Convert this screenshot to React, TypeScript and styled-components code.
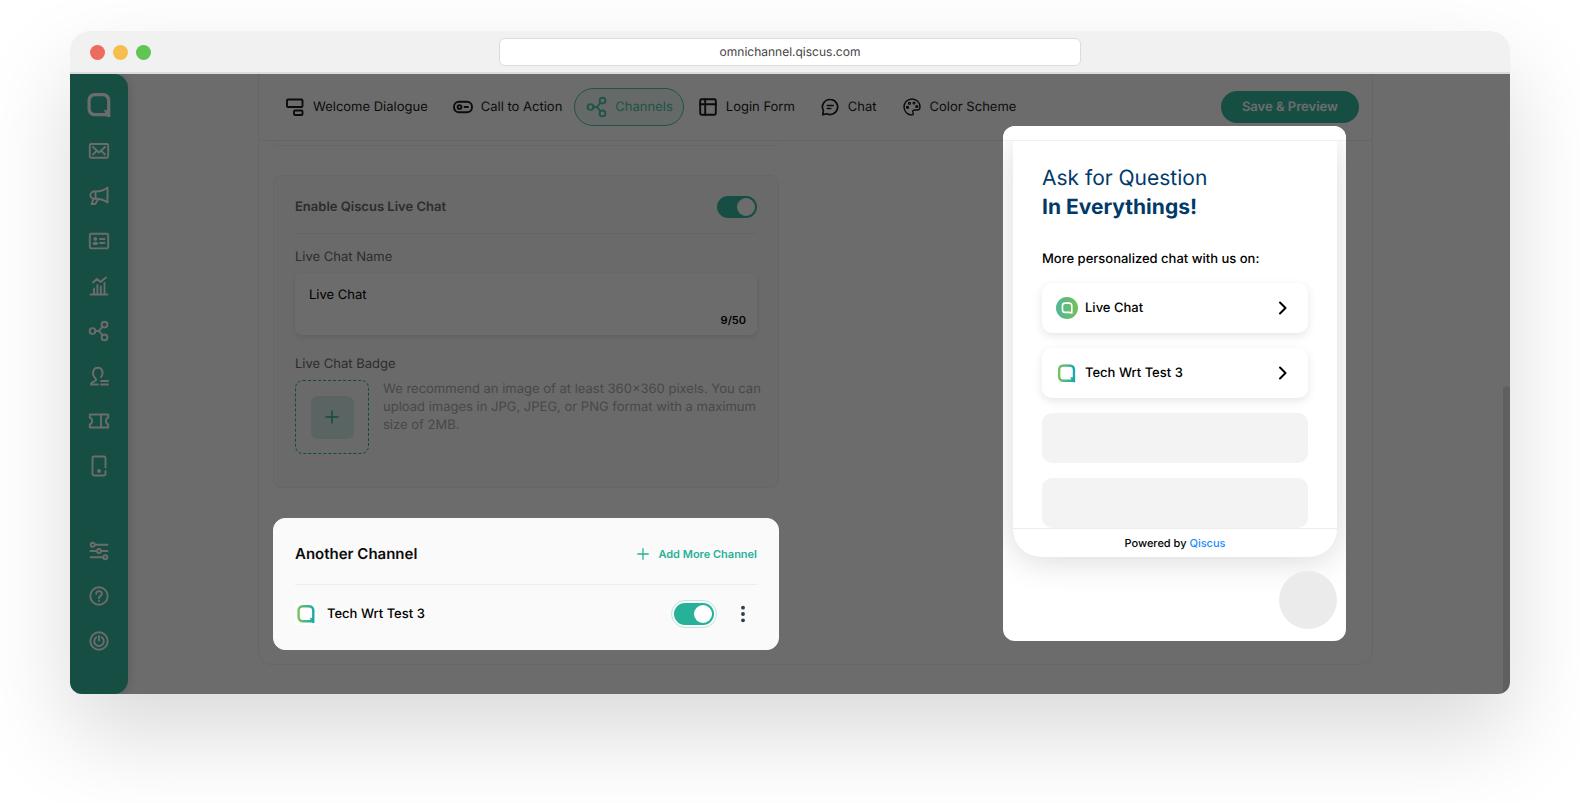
import React from "react";
import styled, { createGlobalStyle } from "styled-components";

const GlobalStyle = createGlobalStyle`
  *, *::before, *::after { box-sizing: border-box; }
  body {
    margin: 0;
    background: #fff;
    color: #000;
    font-family: Inter, "Liberation Sans", sans-serif;
    font-size: 13px;
    line-height: 18px;
    text-rendering: geometricPrecision;
  }
  button, input { font: inherit; color: inherit; text-rendering: inherit; }
  button { background: none; border: 0; padding: 0; cursor: pointer; }
  h1, h2, h3, p, ul { margin: 0; padding: 0; }
  svg { display: block; flex: none; }
`;

const brand = "#27b199";
const brandSoft = "#34b89e";
const line = "#f0f0f0";

/* ---------- browser frame ---------- */

const Stage = styled.div`
  padding: 31px 70px 109px;
  overflow: hidden;
`;

const Browser = styled.div`
  border-radius: 20px 20px 12px 12px;
  box-shadow: 0 40px 90px rgba(0, 0, 0, 0.15);
`;

const TitleBar = styled.header`
  display: grid;
  grid-template-columns: 1fr minmax(200px, 582px) 1fr;
  align-items: center;
  height: 43px;
  padding: 0 20px;
  background: #f1f1f1;
  border-bottom: 2px solid #dcdcdc;
  border-radius: 20px 20px 0 0;
`;

const Lights = styled.div`
  display: flex;
  gap: 8px;
  padding-top: 2px;
`;

const Light = styled.span<{ $color: string }>`
  width: 15px;
  height: 15px;
  border-radius: 50%;
  background: ${(p) => p.$color};
`;

const Address = styled.input`
  width: 100%;
  height: 28px;
  border: 1px solid #dcdcdc;
  border-radius: 6px;
  background: #fff;
  color: #444;
  font-size: 12px;
  text-align: center;
  outline: 0;
`;

const Viewport = styled.div`
  position: relative;
  display: flex;
  overflow: hidden;
  background: #fff;
  border-radius: 0 0 12px 12px;
`;

const Dim = styled.div`
  position: absolute;
  inset: 0;
  z-index: 1;
  background: rgba(0, 0, 0, 0.576);
  pointer-events: none;
`;

const ScrollThumb = styled.div`
  position: absolute;
  top: 312px;
  right: 0;
  bottom: 0;
  width: 7px;
  border-radius: 4px 4px 0 0;
  background: #e0e0e0;
`;

/* ---------- sidebar ---------- */

const Sidebar = styled.nav`
  display: flex;
  flex: none;
  flex-direction: column;
  align-items: center;
  width: 58px;
  padding: 19px 0 41px;
  background: ${brandSoft};
  border-radius: 0 14px 14px 0;
  box-shadow: 2px 0 10px rgba(0, 0, 0, 0.12);
  color: #fff;
`;

const NavList = styled.div<{ $top: number }>`
  display: flex;
  flex-direction: column;
  gap: 21px;
  margin-top: ${(p) => p.$top}px;
`;

const NavLink = styled.a`
  display: block;
  color: inherit;
`;

/* ---------- settings panel ---------- */

const Page = styled.main`
  flex: 1;
  min-width: 0;
  padding: 0 137px 29px 130px;
`;

const Panel = styled.section`
  border: 1px solid ${line};
  border-top: 0;
  border-radius: 0 0 14px 14px;
`;

const Toolbar = styled.div`
  display: flex;
  align-items: center;
  justify-content: space-between;
  height: 67px;
  padding: 0 13px;
  border-bottom: 1px solid ${line};
`;

const Tabs = styled.div`
  display: flex;
  gap: 1px;
`;

const Tab = styled.button<{ $active?: boolean }>`
  display: flex;
  align-items: center;
  gap: 6px;
  height: 38px;
  padding: 0 10px;
  border: 1px solid ${(p) => (p.$active ? "#4cc4ac" : "transparent")};
  border-radius: 19px;
  background: ${(p) => (p.$active ? "#eff8f2" : "transparent")};
  color: ${(p) => (p.$active ? "#4cc4ac" : "#1c1c1c")};
  white-space: nowrap;
`;

const SaveButton = styled.button`
  height: 32px;
  padding: 0 21px;
  border-radius: 16px;
  background: ${brandSoft};
  color: #fff;
  font-weight: 600;
  white-space: nowrap;
`;

const Body = styled.div`
  display: flex;
  align-items: flex-start;
  justify-content: space-between;
  padding: 0 26px 14px 14px;
`;

const Column = styled.div`
  flex: 0 1 506px;
`;

const CardTail = styled.div`
  height: 5px;
  border: 1px solid ${line};
  border-top: 0;
  border-radius: 0 0 10px 10px;
`;

const Card = styled.section<{ $raised?: boolean; $gap: number; $bottom: number }>`
  position: relative;
  z-index: ${(p) => (p.$raised ? 2 : 0)};
  margin-top: ${(p) => p.$gap}px;
  padding: 0 21px ${(p) => p.$bottom}px;
  border: 1px solid ${(p) => (p.$raised ? "#fafafa" : line)};
  border-radius: ${(p) => (p.$raised ? 12 : 8)}px;
  background: #fafafa;
`;

const CardHeader = styled.div<{ $height: number }>`
  display: flex;
  align-items: center;
  justify-content: space-between;
  height: ${(p) => p.$height}px;
  padding-top: 5px;
  border-bottom: 1px solid #ededed;
`;

const CardTitle = styled.h2<{ $muted?: boolean }>`
  color: ${(p) => (p.$muted ? "#6a6a6a" : "#0c0c0c")};
  font-size: ${(p) => (p.$muted ? 13 : 15)}px;
  font-weight: 600;
`;

const FieldLabel = styled.label<{ $top: number }>`
  display: block;
  margin: ${(p) => p.$top}px 0 7px;
  color: #6a6a6a;
`;

const Field = styled.div`
  height: 62px;
  padding: 11px 11px 7px 14px;
  border-radius: 7px;
  background: #fff;
  box-shadow: 0 2px 6px rgba(0, 0, 0, 0.1);
`;

const TextInput = styled.input`
  display: block;
  width: 100%;
  height: 22px;
  padding: 0;
  border: 0;
  outline: 0;
  background: transparent;
`;

const Counter = styled.div`
  margin-top: 5px;
  font-size: 11px;
  font-weight: 600;
  text-align: right;
`;

const UploadRow = styled.div`
  display: flex;
  gap: 14px;
  margin-right: -10px;
`;

const Upload = styled.button`
  display: flex;
  flex: none;
  align-items: center;
  justify-content: center;
  width: 74px;
  height: 74px;
  border: 1px dashed ${brand};
  border-radius: 8px;
`;

const UploadPlus = styled.span`
  display: flex;
  align-items: center;
  justify-content: center;
  width: 43px;
  height: 43px;
  border-radius: 7px;
  background: #d4efea;
  color: ${brand};
`;

const Hint = styled.p`
  color: #aaa;
`;

const Switch = styled.input<{ $focused?: boolean }>`
  appearance: none;
  display: flex;
  flex: none;
  align-items: center;
  justify-content: flex-end;
  width: 40px;
  height: 22px;
  margin: 0;
  padding: 0 2px;
  border-radius: 11px;
  background: ${(p) => (p.$focused ? brand : brandSoft)};
  outline: ${(p) => (p.$focused ? "1px solid #bfe6df" : "0")};
  outline-offset: 2px;
  cursor: pointer;

  &::before {
    content: "";
    width: 18px;
    height: 18px;
    border-radius: 50%;
    background: #fff;
  }
`;

const AddButton = styled.button`
  display: flex;
  align-items: center;
  gap: 8px;
  color: ${brand};
  font-size: 11px;
  font-weight: 600;
`;

const ChannelRow = styled.div`
  display: flex;
  align-items: center;
  height: 57px;
`;

const LogoTile = styled.span`
  display: flex;
  padding: 2px;
  background: #fff;
`;

const ChannelName = styled.label`
  flex: 1;
  margin-left: 10px;
  font-weight: 500;
`;

const MenuButton = styled.button`
  margin: 0 2px 0 17px;
  color: #2d3e50;
`;

/* ---------- widget preview ---------- */

const Preview = styled.aside`
  position: relative;
  z-index: 2;
  flex: none;
  width: 343px;
  height: 515px;
  margin-top: -15px;
  overflow: hidden;
  border-radius: 12px;
  background: #fff;
`;

const PreviewTop = styled.div`
  position: relative;
  z-index: 1;
  height: 15px;
  border-bottom: 1px solid ${line};
  background: #fff;
`;

const Phone = styled.div`
  margin: 0 9px 0 10px;
  overflow: hidden;
  border-radius: 0 0 28px 28px;
  background: #fff;
  box-shadow: 0 4px 34px rgba(0, 0, 0, 0.15);
`;

const PhoneBody = styled.div`
  padding: 23px 29px 0;
`;

const Greeting = styled.h3`
  color: #013a69;
  font-size: 21px;
  font-weight: 400;
  line-height: 29px;

  strong {
    display: block;
    font-weight: 700;
  }
`;

const Lead = styled.p`
  margin: 28px 0 15px;
  font-weight: 500;
`;

const Options = styled.div`
  display: flex;
  flex-direction: column;
  gap: 15px;
`;

const Option = styled.button`
  display: flex;
  align-items: center;
  gap: 7px;
  height: 50px;
  padding: 0 17px 0 14px;
  border-radius: 10px;
  background: #fff;
  box-shadow: 0 3px 10px rgba(0, 0, 0, 0.1);
  font-weight: 500;
  text-align: left;

  span { flex: 1; }
`;

const Placeholder = styled.div`
  height: 50px;
  border-radius: 10px;
  background: #f3f3f3;
`;

const Powered = styled.p`
  height: 29px;
  border-top: 1px solid #ececec;
  font-size: 11px;
  font-weight: 500;
  line-height: 29px;
  text-align: center;

  a { color: #1a8cff; text-decoration: none; }
`;

const Launcher = styled.button`
  display: block;
  width: 58px;
  height: 58px;
  margin: 14px 9px 0 auto;
  border-radius: 50%;
  background: #ebebeb;
`;

/* ---------- icons ---------- */

type IconProps = { children: React.ReactNode; width?: number; size?: number };

const Icon = ({ children, width = 1.9, size = 24 }: IconProps) => (
  <svg
    width={size}
    height={size}
    viewBox="0 0 24 24"
    fill="none"
    stroke="currentColor"
    strokeWidth={width}
    strokeLinecap="round"
    strokeLinejoin="round"
    aria-hidden="true"
  >
    {children}
  </svg>
);

const ShareShape = () => (
  <>
    <circle cx="5.5" cy="12" r="2.9" />
    <circle cx="17.5" cy="5.6" r="2.9" />
    <circle cx="17.5" cy="18.4" r="2.9" />
    <path d="M8.6 12H12M15.4 7.9 12 12l3.4 4.1" />
  </>
);

const QLogo = ({ size, paint = "currentColor" }: { size: number; paint?: string }) => (
  <svg width={size} height={size} viewBox="0 0 24 24" fill="none" aria-hidden="true">
    <defs>
      <linearGradient id="q-gradient" x1="0" y1="0" x2="1" y2="0">
        <stop offset="0" stopColor="#7cc35b" />
        <stop offset="1" stopColor="#12a9ac" />
      </linearGradient>
    </defs>
    <path
      fill={paint}
      fillRule="evenodd"
      d="M7.500 0h8.800A7 7 0 0 1 23.300 7v17.500l-4.500-1.200H7.500A7 7 0 0 1 .5 16.300V7A7 7 0 0 1 7.500 0ZM8 3.200A4.300 4.300 0 0 0 3.700 7.500v8.300A4.300 4.300 0 0 0 8 20.100h10.200l-1.400-3.500 3 .9.300-2V7.500a4.300 4.300 0 0 0-4.300-4.300Z"
    />
  </svg>
);

const Plus = ({ size, width }: { size: number; width: number }) => (
  <Icon size={size} width={width}>
    <path d="M12 3v18M3 12h18" />
  </Icon>
);

const LiveBadge = () => (
  <svg width="22" height="22" viewBox="0 0 22 22" fill="none" aria-hidden="true">
    <defs>
      <linearGradient id="live-gradient" x1="0" y1="0" x2="1" y2="0">
        <stop offset="0" stopColor="#4fb798" />
        <stop offset="1" stopColor="#74c05a" />
      </linearGradient>
    </defs>
    <circle cx="11" cy="11" r="11" fill="url(#live-gradient)" />
    <path
      d="M15.800 16V8.600A2.500 2.500 0 0 0 13.300 6.100H9A2.500 2.500 0 0 0 6.500 8.600v4.300A2.500 2.500 0 0 0 9 15.400h4.300l2.500.6Z"
      stroke="#fff"
      strokeWidth="1.600"
      strokeLinejoin="round"
    />
  </svg>
);

const Chevron = () => (
  <svg width="16" height="16" viewBox="0 0 16 16" fill="none" aria-hidden="true">
    <path d="m5 2.500 5.500 5.500L5 13.500" stroke="#000" strokeWidth="2" strokeLinecap="round" strokeLinejoin="round" />
  </svg>
);

const mainNav: { name: string; shape: React.ReactNode }[] = [
  {
    name: "Inbox",
    shape: (
      <>
        <rect x="2.800" y="5" width="18.400" height="13.800" rx="1.500" />
        <path d="m6 8 6 5.500L18 8M6 15.500l3-3M18 15.500l-3-3" />
      </>
    ),
  },
  {
    name: "Broadcast",
    shape: (
      <>
        <path d="M8.500 7.500c4.500 0 9-1.500 12-4v15c-3-2.500-7-3.800-12-3.800H7a3.600 3.600 0 0 1 0-7.200Z" />
        <path d="M8.500 7.500v7M6.500 15 4.500 20h3.800l3-5" />
      </>
    ),
  },
  {
    name: "Contacts",
    shape: (
      <>
        <rect x="2.800" y="4.800" width="18.400" height="14.600" rx="1.500" />
        <circle cx="8.300" cy="9.900" r="1" fill="currentColor" />
        <ellipse cx="8.300" cy="14.400" rx="1.900" ry=".7" fill="currentColor" />
        <path d="M13 10h4.500M13 14h4.500" />
      </>
    ),
  },
  {
    name: "Analytics",
    shape: (
      <>
        <path d="M3.500 20.500h17M7 20v-5.500M10.400 20v-9M13.800 20v-7.500M17.500 20V9" />
        <path d="m6 8.500 4-3.500 3.500 3L19 3.500" />
      </>
    ),
  },
  { name: "Integration", shape: <ShareShape /> },
  {
    name: "Agents",
    shape: (
      <path d="M11 20.500H4c-.3-2 1-2.500 3.500-3.200 2-.6 2-1.900.6-3.300C4.300 10 6 3.700 10.800 3.700S17 9 14 13M14 17h7M14 20.500h7" />
    ),
  },
  {
    name: "Tickets",
    shape: (
      <path d="M2.800 5.500h18.400v3.200c-3 .8-3 5.800 0 6.600v3.200H2.800v-3.200c3-.8 3-5.800 0-6.600ZM14 5.500v13" />
    ),
  },
  {
    name: "Devices",
    shape: (
      <>
        <path d="M18.500 13.500V4a1.500 1.500 0 0 0-1.500-1.500H7A1.500 1.500 0 0 0 5.500 4v16A1.500 1.500 0 0 0 7 21.500h10a1.500 1.500 0 0 0 1.500-1.500v-3" />
        <circle cx="12" cy="17" r="1" fill="currentColor" />
      </>
    ),
  },
];

const footNav: { name: string; shape: React.ReactNode }[] = [
  {
    name: "Settings",
    shape: (
      <>
        <circle cx="5.700" cy="5.700" r="2" />
        <circle cx="12" cy="12" r="2" />
        <circle cx="18.300" cy="18.300" r="2" />
        <path d="M8 5.700h12.500M3.500 12H10M14 12h6.500M3.500 18.300H16" />
      </>
    ),
  },
  {
    name: "Help",
    shape: (
      <>
        <circle cx="12" cy="12" r="8.700" />
        <path d="M9.200 9.800c0-3.700 5.700-3.500 5.700 0 0 2.300-2.900 2.300-2.900 4.200v.3M12 16.800v.1" />
      </>
    ),
  },
  {
    name: "Log out",
    shape: (
      <>
        <circle cx="12" cy="12" r="8.700" />
        <path d="M12 7v4.500M9.300 8.200a4.800 4.800 0 1 0 5.400 0" />
      </>
    ),
  },
];

const tabs: { name: string; active?: boolean; shape: React.ReactNode }[] = [
  {
    name: "Welcome Dialogue",
    shape: (
      <>
        <rect x="4" y="4.500" width="15.500" height="7.500" rx="1" />
        <rect x="11" y="15.500" width="8.500" height="4.500" rx="1" />
      </>
    ),
  },
  {
    name: "Call to Action",
    shape: (
      <>
        <rect x="3" y="6.700" width="18" height="10.600" rx="5" />
        <circle cx="8.500" cy="12" r="1.900" />
        <path d="M13.500 12h3.500" />
      </>
    ),
  },
  { name: "Channels", active: true, shape: <ShareShape /> },
  {
    name: "Login Form",
    shape: (
      <>
        <rect x="4.200" y="4.200" width="15.600" height="15.600" rx="1.500" />
        <path d="M9.200 4.200v15.600M4.200 9.200h15.600" />
      </>
    ),
  },
  {
    name: "Chat",
    shape: (
      <>
        <path
          strokeWidth="1.700"
          d="M12.300 4.500a7.500 7.500 0 1 1-3.500 14.200L4.800 19.800l.6-4.200A7.500 7.500 0 0 1 12.300 4.500Z"
        />
        <path strokeWidth="1.500" d="M9.300 10.500h6M9.300 13.500h3.500" />
      </>
    ),
  },
  {
    name: "Color Scheme",
    shape: (
      <>
        <path
          strokeWidth="1.400"
          d="M12 4a8 8 0 1 0 0 16c1.500 0 1.700-1 1-2.200-.8-1.500 0-2.800 1.500-2.800h3c1.500 0 2.500-1.300 2.500-3A8 8 0 0 0 12 4Z"
        />
        <g strokeWidth="1.200">
          <circle cx="7.500" cy="12.300" r="1" fill="currentColor" />
          <circle cx="9.500" cy="8.300" r="1" />
          <circle cx="14" cy="8" r="1" />
          <circle cx="16.800" cy="11.500" r="1" fill="currentColor" />
        </g>
      </>
    ),
  },
];

export default function App() {
  return (
    <Stage>
      <GlobalStyle />
      <Browser>
        <TitleBar>
          <Lights>
            <Light $color="#ed6a5e" />
            <Light $color="#f5bf4f" />
            <Light $color="#61c554" />
          </Lights>
          <Address aria-label="Address" defaultValue="omnichannel.qiscus.com" />
        </TitleBar>

        <Viewport>
          <Sidebar aria-label="Main">
            <QLogo size={24} />
            <NavList $top={22}>
              {mainNav.map((item) => (
                <NavLink key={item.name} href="#" aria-label={item.name}>
                  <Icon>{item.shape}</Icon>
                </NavLink>
              ))}
            </NavList>
            <NavList $top={61}>
              {footNav.map((item) => (
                <NavLink key={item.name} href="#" aria-label={item.name}>
                  <Icon>{item.shape}</Icon>
                </NavLink>
              ))}
            </NavList>
          </Sidebar>

          <Page>
            <Panel>
              <Toolbar>
                <Tabs role="tablist">
                  {tabs.map((tab) => (
                    <Tab key={tab.name} role="tab" aria-selected={!!tab.active} $active={tab.active}>
                      <Icon>{tab.shape}</Icon>
                      {tab.name}
                    </Tab>
                  ))}
                </Tabs>
                <SaveButton>Save &amp; Preview</SaveButton>
              </Toolbar>

              <Body>
                <Column>
                  <CardTail />
                  <Card $gap={29} $bottom={33}>
                    <CardHeader $height={58}>
                      <CardTitle $muted>
                        <label htmlFor="live-chat-switch">Enable Qiscus Live Chat</label>
                      </CardTitle>
                      <Switch id="live-chat-switch" type="checkbox" defaultChecked />
                    </CardHeader>
                    <FieldLabel $top={14} htmlFor="live-chat-name">
                      Live Chat Name
                    </FieldLabel>
                    <Field>
                      <TextInput id="live-chat-name" defaultValue="Live Chat" />
                      <Counter>9/50</Counter>
                    </Field>
                    <FieldLabel $top={20} htmlFor="live-chat-badge">
                      Live Chat Badge
                    </FieldLabel>
                    <UploadRow>
                      <Upload id="live-chat-badge">
                        <UploadPlus>
                          <Plus size={16} width={2.2} />
                        </UploadPlus>
                      </Upload>
                      <Hint>
                        We recommend an image of at least 360×360 pixels. You can upload images in JPG, JPEG, or PNG
                        format with a maximum size of 2MB.
                      </Hint>
                    </UploadRow>
                  </Card>

                  <Card $raised $gap={30} $bottom={7}>
                    <CardHeader $height={66}>
                      <CardTitle>Another Channel</CardTitle>
                      <AddButton>
                        <Plus size={14} width={2.2} />
                        Add More Channel
                      </AddButton>
                    </CardHeader>
                    <ChannelRow>
                      <LogoTile>
                        <QLogo size={18} paint="url(#q-gradient)" />
                      </LogoTile>
                      <ChannelName htmlFor="channel-switch">Tech Wrt Test 3</ChannelName>
                      <Switch id="channel-switch" type="checkbox" defaultChecked $focused />
                      <MenuButton aria-label="Channel menu">
                        <svg width="24" height="24" viewBox="0 0 24 24" fill="currentColor" aria-hidden="true">
                          <circle cx="12" cy="5.700" r="1.900" />
                          <circle cx="12" cy="12" r="1.900" />
                          <circle cx="12" cy="18.300" r="1.900" />
                        </svg>
                      </MenuButton>
                    </ChannelRow>
                  </Card>
                </Column>

                <Preview aria-label="Widget preview">
                  <PreviewTop />
                  <Phone>
                    <PhoneBody>
                      <Greeting>
                        Ask for Question <strong>In Everythings!</strong>
                      </Greeting>
                      <Lead>More personalized chat with us on:</Lead>
                      <Options>
                        <Option>
                          <LiveBadge />
                          <span>Live Chat</span>
                          <Chevron />
                        </Option>
                        <Option>
                          <svg width="22" height="22" viewBox="-2 -3 29 29" aria-hidden="true">
                            <QLogo size={24} paint="url(#q-gradient)" />
                          </svg>
                          <span>Tech Wrt Test 3</span>
                          <Chevron />
                        </Option>
                        <Placeholder />
                        <Placeholder />
                      </Options>
                    </PhoneBody>
                    <Powered>
                      Powered by <a href="#">Qiscus</a>
                    </Powered>
                  </Phone>
                  <Launcher aria-label="Open chat" />
                </Preview>
              </Body>
            </Panel>
          </Page>
          <ScrollThumb />
          <Dim />
        </Viewport>
      </Browser>
    </Stage>
  );
}
